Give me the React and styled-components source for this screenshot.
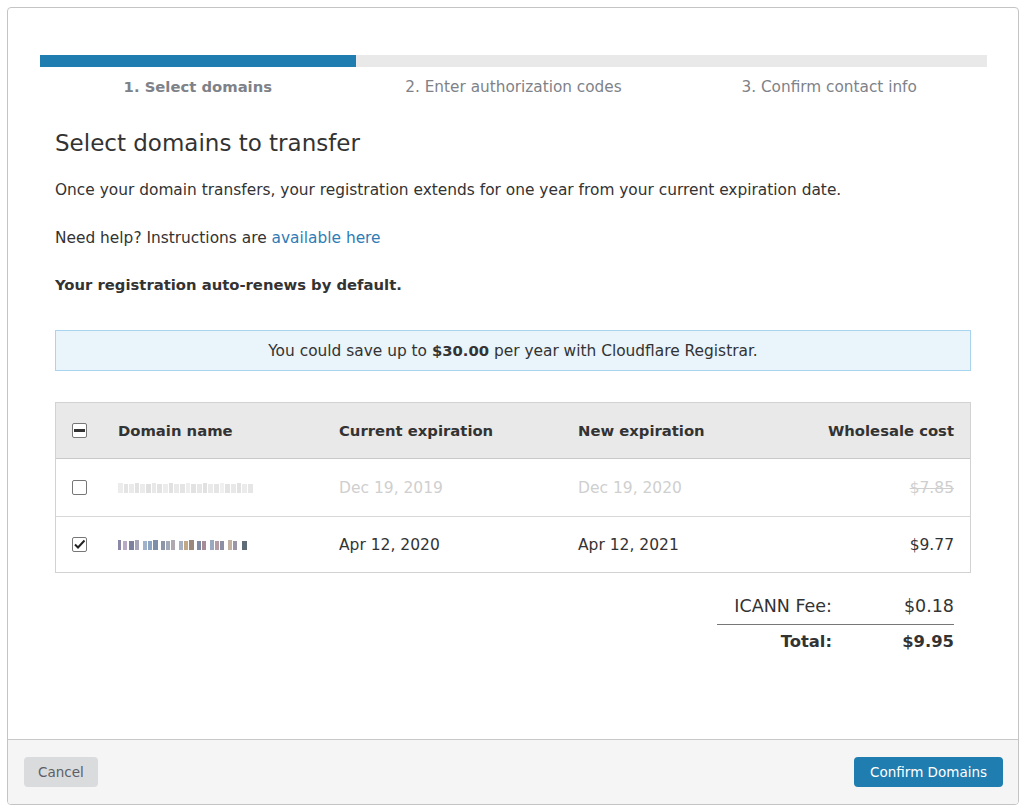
import React from "react";
import styled, { createGlobalStyle } from "styled-components";

const GlobalStyle = createGlobalStyle`
  html, body { margin: 0; padding: 0; background: #ffffff; }
  body { font-family: "DejaVu Sans", Verdana, sans-serif; color: #333; }
  * { box-sizing: border-box; }
`;

const Page = styled.div`
  padding: 7px 6px 7px 7px;
`;

const Modal = styled.div`
  width: 1012px;
  height: 798px;
  border: 1px solid #c4c4c4;
  border-radius: 4px;
  display: flex;
  flex-direction: column;
  overflow: hidden;
`;

const Body = styled.div`
  flex: 1;
  padding: 47px 31px 0 32px;
`;

const Progress = styled.div`
  display: grid;
  grid-template-columns: repeat(3, 1fr);
  height: 12px;
  background: #e9e9e9;
`;

const ProgressFill = styled.div`
  background: ${(p) => (p.$active ? "#1f7db0" : "transparent")};
`;

const Steps = styled.div`
  display: grid;
  grid-template-columns: repeat(3, 1fr);
  margin-top: 10px;
`;

const Step = styled.div`
  text-align: center;
  font-size: ${(p) => (p.$active ? "14.8px" : "15.3px")};
  line-height: 20px;
  color: #7e8288;
  font-weight: ${(p) => (p.$active ? 700 : 400)};
`;

const Content = styled.div`
  padding: 0 16px 0 15px;
`;

const Heading = styled.h1`
  margin: 31px 0 0;
  font-size: 23px;
  line-height: 30px;
  font-weight: 400;
  color: #333;
`;

const Para = styled.p`
  margin: ${(p) => p.$top}px 0 0;
  font-size: ${(p) => (p.$bold ? "14.8px" : "15.4px")};
  line-height: 22px;
  color: #333;
  font-weight: ${(p) => (p.$bold ? 700 : 400)};
`;

const Link = styled.a`
  color: #2f7cb5;
  text-decoration: none;
`;

const Banner = styled.div`
  margin-top: 34px;
  height: 41px;
  border: 1px solid #a9d4ef;
  background: #e9f4fb;
  display: flex;
  align-items: center;
  justify-content: center;
  font-size: 15.4px;
  color: #333;
  b { font-size: 14.8px; }
`;

const Table = styled.div`
  margin-top: 31px;
  border: 1px solid #d2d2d2;
`;

const Row = styled.div`
  display: grid;
  grid-template-columns: 46px 221px 239px 1fr auto;
  align-items: center;
  height: ${(p) => (p.$tall ? 57 : 56)}px;
  padding: 0 16px 0 16px;
  background: ${(p) => (p.$head ? "#e9e9e9" : "#fff")};
  border-top: ${(p) => (p.$first ? "none" : "1px solid #d8d8d8")};
  border-bottom: ${(p) => (p.$head ? "1px solid #c9c9c9" : "none")};
  font-size: ${(p) => (p.$head ? "14.8px" : "15.5px")};
  font-weight: ${(p) => (p.$head ? 700 : 400)};
  color: ${(p) => (p.$disabled ? "#cfcfcf" : "#333")};
`;

const Cost = styled.div`
  text-align: right;
  text-decoration: ${(p) => (p.$strike ? "line-through" : "none")};
`;

const Box = styled.span`
  display: inline-flex;
  align-items: center;
  justify-content: center;
  width: 15px;
  height: 15px;
  border: 1px solid #777;
  border-radius: 2px;
  background: #fff;
`;

const Summary = styled.div`
  margin: 21px 17px 0 auto;
  width: 237px;
  display: grid;
  grid-template-columns: 115px 1fr;
  color: #333;
`;

const SumCell = styled.div`
  text-align: right;
  line-height: 24px;
  padding: ${(p) => (p.$total ? "5px 0 0" : "0 0 6px")};
  border-bottom: ${(p) => (p.$line ? "1px solid #777" : "none")};
  font-weight: ${(p) => (p.$total ? 700 : 400)};
  font-size: ${(p) => (p.$total ? "16.4px" : "17.5px")};
`;

const Footer = styled.div`
  height: 65px;
  border-top: 1px solid #c9c9c9;
  background: #f5f5f5;
  display: flex;
  align-items: center;
  justify-content: space-between;
  padding: 0 15px 0 16px;
`;

const Button = styled.button`
  height: 30px;
  border: none;
  border-radius: 4px;
  font-family: inherit;
  font-size: 13.5px;
  padding: 0 ${(p) => (p.$primary ? 16 : 14)}px;
  background: ${(p) => (p.$primary ? "#1f7db0" : "#d9dbdd")};
  color: ${(p) => (p.$primary ? "#fff" : "#5c6066")};
`;

const Checkbox = ({ state }) => (
  <Box>
    {state === "mixed" && (
      <svg width="11" height="11" viewBox="0 0 11 11">
        <rect x="0" y="4" width="11" height="3" fill="#333" />
      </svg>
    )}
    {state === "checked" && (
      <svg width="13" height="13" viewBox="0 0 13 13">
        <path d="M2 6.5 L5 9.5 L11.5 2.5" fill="none" stroke="#222" strokeWidth="2" />
      </svg>
    )}
  </Box>
);

const blurA = [
  [0, 5, "#ececec"], [6, 4, "#e4e4e4"], [11, 5, "#eaeaea"], [17, 4, "#e2e2e2"], [22, 5, "#ebebeb"],
  [28, 5, "#e0e0e0"], [34, 4, "#e8e8e8"], [39, 5, "#e3e3e3"], [45, 5, "#ececec"], [51, 4, "#e1e1e1"],
  [56, 5, "#e9e9e9"], [62, 5, "#e4e4e4"], [68, 4, "#ededed"], [73, 5, "#e2e2e2"], [79, 5, "#e7e7e7"],
  [85, 4, "#e1e1e1"], [90, 5, "#eaeaea"], [96, 5, "#e5e5e5"], [102, 4, "#f0f0f0"], [107, 5, "#e3e3e3"],
  [113, 5, "#e8e8e8"], [119, 4, "#e2e2e2"], [124, 5, "#ebebeb"], [130, 5, "#e6e6e6"],
];

const blurB = [
  [0, 3, "#8a88a6"], [5, 4, "#b8a9c4"], [11, 5, "#7d7f9e"], [17, 4, "#a6a4b8"], [25, 4, "#9fb2c9"],
  [30, 4, "#8da4c2"], [35, 5, "#7f8ea8"], [43, 4, "#8f95a9"], [48, 4, "#a3a9b6"], [53, 4, "#b0aab0"],
  [61, 4, "#a8b1c2"], [66, 4, "#c2a985"], [71, 5, "#9b8a7c"], [79, 4, "#7f8aa3"], [84, 4, "#a58c96"],
  [92, 4, "#9aa8c0"], [97, 4, "#b49ca5"], [102, 4, "#8c8fa3"], [110, 4, "#c3b1a2"], [115, 4, "#9e94a8"],
  [124, 5, "#5f6c76"],
];

const Blurred = ({ blocks, width }) => (
  <svg width={width} height="12" viewBox={`0 0 ${width} 12`}>
    {blocks.map(([x, w, c], i) => (
      <rect key={i} x={x} y={i % 3 === 0 ? 1 : 2} width={w} height={i % 3 === 0 ? 10 : 9} fill={c} />
    ))}
  </svg>
);

export default function App() {
  return (
    <>
      <GlobalStyle />
      <Page>
        <Modal>
          <Body>
            <Progress>
              <ProgressFill $active />
              <ProgressFill />
              <ProgressFill />
            </Progress>
            <Steps>
              <Step $active>1. Select domains</Step>
              <Step>2. Enter authorization codes</Step>
              <Step>3. Confirm contact info</Step>
            </Steps>
            <Content>
              <Heading>Select domains to transfer</Heading>
              <Para $top={21}>
                Once your domain transfers, your registration extends for one year from your current expiration date.
              </Para>
              <Para $top={26}>
                Need help? Instructions are <Link href="#">available here</Link>
              </Para>
              <Para $top={25} $bold>
                Your registration auto-renews by default.
              </Para>
              <Banner>
                <span>
                  You could save up to <b>$30.00</b> per year with Cloudflare Registrar.
                </span>
              </Banner>
              <Table>
                <Row $head $first>
                  <Checkbox state="mixed" />
                  <div>Domain name</div>
                  <div>Current expiration</div>
                  <div>New expiration</div>
                  <Cost>Wholesale cost</Cost>
                </Row>
                <Row $first $disabled $tall>
                  <Checkbox />
                  <Blurred blocks={blurA} width={136} />
                  <div>Dec 19, 2019</div>
                  <div>Dec 19, 2020</div>
                  <Cost $strike>$7.85</Cost>
                </Row>
                <Row>
                  <Checkbox state="checked" />
                  <Blurred blocks={blurB} width={130} />
                  <div>Apr 12, 2020</div>
                  <div>Apr 12, 2021</div>
                  <Cost>$9.77</Cost>
                </Row>
              </Table>
              <Summary>
                <SumCell $line>ICANN Fee:</SumCell>
                <SumCell $line>$0.18</SumCell>
                <SumCell $total>Total:</SumCell>
                <SumCell $total>$9.95</SumCell>
              </Summary>
            </Content>
          </Body>
          <Footer>
            <Button>Cancel</Button>
            <Button $primary>Confirm Domains</Button>
          </Footer>
        </Modal>
      </Page>
    </>
  );
}
